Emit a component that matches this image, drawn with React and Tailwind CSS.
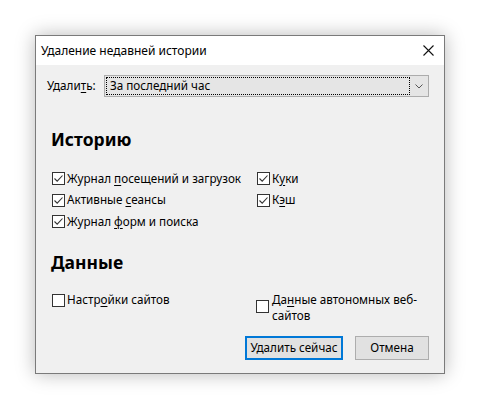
import React from 'react'

const font = { fontFamily: '"Noto Sans", "Open Sans", sans-serif' }

// access-key letter, underlined like the Windows dialog
function K({ children }) {
  return <span className="underline underline-offset-2">{children}</span>
}

function Box({ checked }) {
  return (
    <span className="flex h-[13px] w-[13px] shrink-0 items-center justify-center border border-[#333] bg-white">
      {checked && (
        <svg width="11" height="11" viewBox="0 0 11 11" fill="none">
          <path d="M1.5 5.5 L4.2 8.2 L9.5 2.5" stroke="#333" strokeWidth="1.1" />
        </svg>
      )}
    </span>
  )
}

function Check({ checked = true, children, className = '' }) {
  return (
    <label className={`flex h-[21.5px] items-center gap-[2px] ${className}`}>
      <Box checked={checked} />
      <span>{children}</span>
    </label>
  )
}

export default function App() {
  return (
    <div className="h-[413px] w-[482px] bg-white pl-[35px] pt-[35px] text-[11.7px] text-black" style={font}>
      <div className="flex h-[339px] w-[410px] flex-col border border-[#7a7a7a] bg-[#f0f0f0] shadow-[0_0_18px_rgba(0,0,0,0.28)]">
        {/* title bar */}
        <div className="flex h-[29px] shrink-0 items-center justify-between bg-white pl-[5px] pr-[10px] text-[12px]">
          <span>Удаление недавней истории</span>
          <svg width="11" height="11" viewBox="0 0 11 11" fill="none">
            <path d="M0.5 0.5 L10.5 10.5 M10.5 0.5 L0.5 10.5" stroke="#111" strokeWidth="1.1" />
          </svg>
        </div>

        <div className="flex flex-1 flex-col px-[15px] pt-[10px] pb-[13px]">
          {/* range select */}
          <div className="flex items-center">
            <span className="-ml-[4px] w-[57px]">
              Удали<K>т</K>ь:
            </span>
            <div className="flex h-[22px] flex-1 items-center border border-[#acacac] bg-[#e5e5e5] p-[1px]">
              <div className="flex h-full flex-1 items-center border border-dotted border-black pl-[3px]">За последний час</div>
              <div className="flex w-[17px] items-center justify-center">
                <svg width="8" height="5" viewBox="0 0 8 5" fill="none">
                  <path d="M0.5 0.5 L4 4 L7.5 0.5" stroke="#555" />
                </svg>
              </div>
            </div>
          </div>

          <h2 className="mt-[31px] text-[17.5px] font-bold leading-[22px]">Историю</h2>

          <div className="mt-[18px] grid grid-cols-[205px_1fr] pl-[1px]">
            <Check>
              Журнал <K>п</K>осещений и загрузок
            </Check>
            <Check>
              К<K>у</K>ки
            </Check>
            <Check>
              Активные <K>с</K>еансы
            </Check>
            <Check>
              К<K>э</K>ш
            </Check>
            <Check>
              Журнал <K>ф</K>орм и поиска
            </Check>
          </div>

          <h2 className="mt-[18px] text-[17.5px] font-bold leading-[22px]">Данные</h2>

          <div className="mt-[18px] grid grid-cols-[204px_1fr] items-start pl-[1px]">
            <Check checked={false} className="mt-[-1px] h-[16px]">
              Настр<K>о</K>йки сайтов
            </Check>
            <label className="flex items-center gap-[3px]">
              <Box />
              <span className="leading-[16px]">
                Да<K>н</K>ные автономных веб-
                <br />
                сайтов
              </span>
            </label>
          </div>

          <div className="mt-auto flex justify-end gap-[12px]">
            <button className="h-[24px] w-[98px] border-2 border-[#0078d7] bg-[#e1e1e1]">Удалить сейчас</button>
            <button className="h-[24px] w-[74px] border border-[#adadad] bg-[#e1e1e1]">Отмена</button>
          </div>
        </div>
      </div>
    </div>
  )
}
